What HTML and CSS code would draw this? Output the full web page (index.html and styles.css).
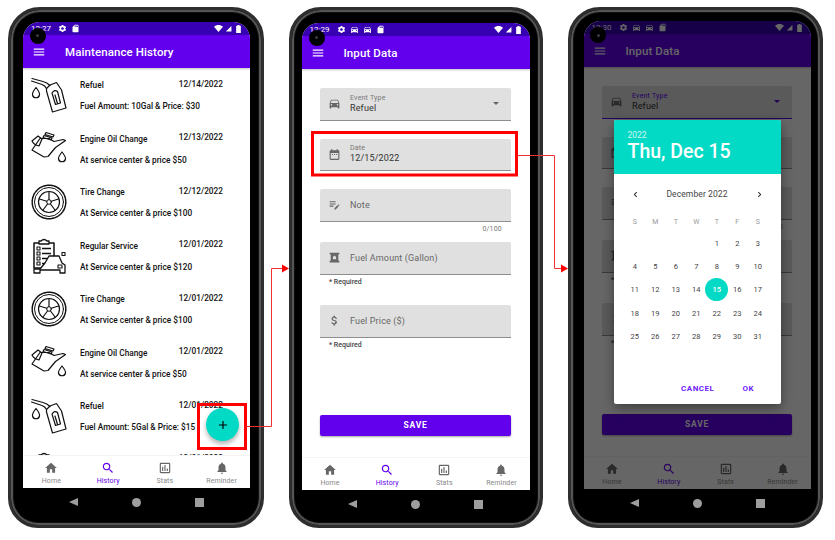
FILE: index.html
```html
<!DOCTYPE html>
<html lang="en">
<head>
    <meta charset="UTF-8">
    <meta name="viewport" content="width=device-width, initial-scale=1.0">
    <title>Maintenance App Flow</title>
    <link rel="stylesheet" href="styles.css">
</head>
<body>
    <!-- Shared icons -->
    <svg class="defs" width="0" height="0">
        <symbol id="i-menu" viewBox="0 0 24 24"><path d="M3 18h18v-2H3v2zm0-5h18v-2H3v2zm0-7v2h18V6H3z"/></symbol>
        <symbol id="i-gear" viewBox="0 0 24 24"><path d="M19.14 12.94c.04-.3.06-.61.06-.94 0-.32-.02-.64-.07-.94l2.03-1.58c.18-.14.23-.41.12-.61l-1.92-3.32c-.12-.22-.37-.29-.59-.22l-2.39.96c-.5-.38-1.03-.7-1.62-.94l-.36-2.54c-.04-.24-.24-.41-.48-.41h-3.84c-.24 0-.43.17-.47.41l-.36 2.54c-.59.24-1.13.57-1.62.94l-2.39-.96c-.22-.08-.47 0-.59.22L2.74 8.87c-.12.21-.08.47.12.61l2.03 1.58c-.05.3-.09.63-.09.94s.02.64.07.94l-2.03 1.58c-.18.14-.23.41-.12.61l1.92 3.32c.12.22.37.29.59.22l2.39-.96c.5.38 1.03.7 1.62.94l.36 2.54c.05.24.24.41.48.41h3.84c.24 0 .44-.17.47-.41l.36-2.54c.59-.24 1.13-.56 1.62-.94l2.39.96c.22.08.47 0 .59-.22l1.92-3.32c.12-.22.07-.47-.12-.61l-2.01-1.58zM12 15.6c-1.98 0-3.6-1.62-3.6-3.6s1.62-3.6 3.6-3.6 3.6 1.62 3.6 3.6-1.62 3.6-3.6 3.6z"/></symbol>
        <symbol id="i-sd" viewBox="0 0 24 24"><path d="M18 2h-8L4.02 8 4 20c0 1.1.9 2 2 2h12c1.1 0 2-.9 2-2V4c0-1.1-.9-2-2-2zm-6 6h-2V4h2v4zm3 0h-2V4h2v4zm3 0h-2V4h2v4z"/></symbol>
        <symbol id="i-car" viewBox="0 0 24 24"><path d="M18.92 6.01C18.72 5.42 18.16 5 17.5 5h-11c-.66 0-1.21.42-1.42 1.01L3 12v8c0 .55.45 1 1 1h1c.55 0 1-.45 1-1v-1h12v1c0 .55.45 1 1 1h1c.55 0 1-.45 1-1v-8l-2.08-5.99zM6.5 16c-.83 0-1.5-.67-1.5-1.5S5.67 13 6.5 13s1.5.67 1.5 1.5S7.33 16 6.5 16zm11 0c-.83 0-1.5-.67-1.5-1.5s.67-1.5 1.5-1.5 1.5.67 1.5 1.5-.67 1.5-1.5 1.5zM5 11l1.5-4.5h11L19 11H5z"/></symbol>
        <symbol id="i-wifi" viewBox="0 0 24 24"><path d="M12 21 0 7c7-6 17-6 24 0z"/></symbol>
        <symbol id="i-signal" viewBox="0 0 24 24"><path d="M22 3v19H3z"/></symbol>
        <symbol id="i-battery" viewBox="0 0 14 24"><path d="M4 0h6v2h3a1 1 0 0 1 1 1v20a1 1 0 0 1-1 1H1a1 1 0 0 1-1-1V3a1 1 0 0 1 1-1h3z"/></symbol>
        <symbol id="i-home" viewBox="0 0 24 24"><path d="M10 20v-6h4v6h5v-8h3L12 3 2 12h3v8z"/></symbol>
        <symbol id="i-search" viewBox="0 0 24 24"><path d="M15.5 14h-.79l-.28-.27C15.41 12.59 16 11.11 16 9.5 16 5.91 13.09 3 9.5 3S3 5.91 3 9.5 5.91 16 9.5 16c1.61 0 3.09-.59 4.23-1.57l.27.28v.79l5 4.99L20.49 19l-4.99-5zm-6 0C7.01 14 5 11.99 5 9.5S7.01 5 9.5 5 14 7.01 14 9.5 11.99 14 9.5 14z"/></symbol>
        <symbol id="i-stats" viewBox="0 0 24 24"><path d="M19 3H5c-1.1 0-2 .9-2 2v14c0 1.1.9 2 2 2h14c1.1 0 2-.9 2-2V5c0-1.1-.9-2-2-2zm0 16H5V5h14v14zM7 10h2v7H7zm4-3h2v10h-2zm4 6h2v4h-2z"/></symbol>
        <symbol id="i-bell" viewBox="0 0 24 24"><path d="M12 22c1.1 0 2-.9 2-2h-4c0 1.1.89 2 2 2zm6-6v-5c0-3.07-1.64-5.64-4.5-6.32V4c0-.83-.67-1.5-1.5-1.5s-1.5.67-1.5 1.5v.68C7.63 5.36 6 7.92 6 11v5l-2 2v1h16v-1l-2-2z"/></symbol>
        <symbol id="i-date" viewBox="0 0 24 24"><path d="M9 11H7v2h2v-2zm4 0h-2v2h2v-2zm4 0h-2v2h2v-2zm2-7h-1V2h-2v2H8V2H6v2H5c-1.11 0-1.99.9-1.99 2L3 20c0 1.1.89 2 2 2h14c1.1 0 2-.9 2-2V6c0-1.1-.9-2-2-2zm0 16H5V9h14v11z"/></symbol>
        <symbol id="i-note" viewBox="0 0 24 24"><path d="M3 10h11v2H3v-2zm0-2h11V6H3v2zm0 8h7v-2H3v2zm15.01-3.13.71-.71c.39-.39 1.02-.39 1.41 0l.71.71c.39.39.39 1.02 0 1.41l-.71.71-2.12-2.12zm-.71.71-5.3 5.3V21h2.12l5.3-5.3-2.12-2.12z"/></symbol>
        <symbol id="i-gas" viewBox="0 0 24 24"><path fill-rule="evenodd" d="M3 3h18v3h-2v12h2v3H3v-3h2V6H3zm9 5.5-3 2.5v4h6v-4z"/></symbol>
        <symbol id="i-dollar" viewBox="0 0 24 24"><path d="M11.8 10.9c-2.27-.59-3-1.2-3-2.15 0-1.09 1.01-1.85 2.7-1.85 1.78 0 2.44.85 2.5 2.1h2.21c-.07-1.72-1.12-3.3-3.21-3.81V3h-3v2.16c-1.94.42-3.5 1.68-3.5 3.61 0 2.31 1.91 3.46 4.7 4.13 2.5.6 3 1.48 3 2.41 0 .69-.49 1.79-2.7 1.79-2.06 0-2.87-.92-2.98-2.1h-2.2c.12 2.19 1.76 3.42 3.68 3.83V21h3v-2.15c1.95-.37 3.5-1.5 3.5-3.55 0-2.84-2.43-3.81-4.7-4.4z"/></symbol>
        <symbol id="i-prev" viewBox="0 0 24 24"><path d="M15.41 7.41 14 6l-6 6 6 6 1.41-1.41L10.83 12z"/></symbol>
        <symbol id="i-next" viewBox="0 0 24 24"><path d="M10 6 8.59 7.41 13.17 12l-4.58 4.59L10 18l6-6z"/></symbol>
        <symbol id="i-plus" viewBox="0 0 24 24"><path d="M19 13h-6v6h-2v-6H5v-2h6V5h2v6h6z"/></symbol>

        <symbol id="i-refuel" viewBox="0 0 36 36">
            <g fill="none" stroke="#111" stroke-width="1.2" stroke-linejoin="round" stroke-linecap="round">
                <path d="M1 1.500 12 4.500q4 1 7 4"/>
                <path d="M.5 4 11 7.500q3 1 4.500 4"/>
                <path d="M15.500 11.500 19 8l6.500-2.500 5 7.500 4.500 18-13.500 4-6-21z"/>
                <path d="M21 16q2.500-4 5.500-1.500l3 11.500-5 1.500z"/>
                <path d="M24 18l2.500 8.500"/>
                <path d="M5 10.500q-4 5-3.500 7.500a3.600 3.600 0 0 0 7 0q.5-2.500-3.500-7.500z"/>
            </g>
        </symbol>
        <symbol id="i-oil" viewBox="0 0 36 36">
            <g fill="none" stroke="#111" stroke-width="1.2" stroke-linejoin="round" stroke-linecap="round">
                <path d="M1 10 7 5l4 3-3 7q-5-1-7-5z"/>
                <path d="M9 7.500h9l5 3 9-2 2.500 1-10 7-7.500 9-4 .5-12-7z"/>
                <path d="M15 1.500l8 2.500-1 2-8-2.500zM13 4.500l8 2.500-1 2-8-2.500z"/>
                <path d="M31 21q-4 5-3.500 7a3.600 3.600 0 0 0 7 0q.5-2-3.500-7z"/>
            </g>
        </symbol>
        <symbol id="i-tire" viewBox="0 0 36 36">
            <g fill="none" stroke="#111" stroke-linecap="round">
                <circle cx="18" cy="18" r="16.800" stroke-width="1.500" stroke-dasharray="2.500 1"/>
                <circle cx="18" cy="18" r="14.500" stroke-width="1"/>
                <circle cx="18" cy="18" r="10.500" stroke-width="1.200"/>
                <circle cx="18" cy="18" r="2.300" stroke-width="1"/>
                <path stroke-width="1.200" d="M18 8v7.500M8.500 15l7.200 2.200M12 26l4.500-6M24 26l-4.500-6M27.500 15l-7.200 2.200"/>
            </g>
        </symbol>
        <symbol id="i-service" viewBox="0 0 36 36">
            <g stroke="#111" stroke-linejoin="round">
                <path fill="#fff" stroke-width="1.500" d="M3 5h20v25H3z"/>
                <path fill="#fff" stroke-width="1.300" d="M10 3q3-3 6 0h2v3H8V3z"/>
                <path fill="none" stroke-width="1.100" d="M6 9h3v3H6zM6 14h3v3H6zM6 19h3v3H6zM6 24h3v3H6z"/>
                <path fill="none" stroke-width="1.400" d="M11 10.500h9M11 15.500h9M11 20.500h9M11 25.500h9"/>
                <path fill="#fff" stroke-width="1.300" d="M18 18h10l3 7 3 2v8h-5v-3H9v3H3v-4h6l5-6z"/>
                <path fill="none" stroke-width="1.100" d="M27 27h4v3h-4zM31 14.500h3v3h-3z"/>
            </g>
        </symbol>
    </svg>

    <div class="stage">
        <!-- History screen -->
        <div class="phone phone-a">
            <span class="camera"><i></i></span>
            <div class="screen">
                <div class="statusbar">
                    <span class="clock">12:27</span>
                    <svg class="sbi"><use href="#i-gear"/></svg>
                    <svg class="sbi"><use href="#i-sd"/></svg>
                    <span class="sb-right">
                        <svg class="sbi"><use href="#i-wifi"/></svg>
                        <svg class="sbi sbi-sm"><use href="#i-signal"/></svg>
                        <svg class="sbi sbi-bat"><use href="#i-battery"/></svg>
                    </span>
                </div>
                <div class="appbar">
                    <svg class="menu"><use href="#i-menu"/></svg>
                    <span>Maintenance History</span>
                </div>
                <div class="list">
                    <div class="row">
                        <svg class="row-icon"><use href="#i-refuel"/></svg>
                        <div class="row-text">
                            <div class="row-top"><span>Refuel</span><span class="row-date">12/14/2022</span></div>
                            <div class="row-sub">Fuel Amount: 10Gal &amp; Price: $30</div>
                        </div>
                    </div>
                    <div class="row">
                        <svg class="row-icon"><use href="#i-oil"/></svg>
                        <div class="row-text">
                            <div class="row-top"><span>Engine Oil Change</span><span class="row-date">12/13/2022</span></div>
                            <div class="row-sub">At service center &amp; price $50</div>
                        </div>
                    </div>
                    <div class="row">
                        <svg class="row-icon"><use href="#i-tire"/></svg>
                        <div class="row-text">
                            <div class="row-top"><span>Tire Change</span><span class="row-date">12/12/2022</span></div>
                            <div class="row-sub">At Service center &amp; price $100</div>
                        </div>
                    </div>
                    <div class="row">
                        <svg class="row-icon"><use href="#i-service"/></svg>
                        <div class="row-text">
                            <div class="row-top"><span>Regular Service</span><span class="row-date">12/01/2022</span></div>
                            <div class="row-sub">At Service center &amp; price $120</div>
                        </div>
                    </div>
                    <div class="row">
                        <svg class="row-icon"><use href="#i-tire"/></svg>
                        <div class="row-text">
                            <div class="row-top"><span>Tire Change</span><span class="row-date">12/01/2022</span></div>
                            <div class="row-sub">At Service center &amp; price $100</div>
                        </div>
                    </div>
                    <div class="row">
                        <svg class="row-icon"><use href="#i-oil"/></svg>
                        <div class="row-text">
                            <div class="row-top"><span>Engine Oil Change</span><span class="row-date">12/01/2022</span></div>
                            <div class="row-sub">At service center &amp; price $50</div>
                        </div>
                    </div>
                    <div class="row">
                        <svg class="row-icon"><use href="#i-refuel"/></svg>
                        <div class="row-text">
                            <div class="row-top"><span>Refuel</span><span class="row-date">12/01/2022</span></div>
                            <div class="row-sub">Fuel Amount: 5Gal &amp; Price: $15</div>
                        </div>
                    </div>
                    <div class="row">
                        <svg class="row-icon"><use href="#i-service"/></svg>
                        <div class="row-text">
                            <div class="row-top"><span></span><span class="row-date">12/01/2022</span></div>
                        </div>
                    </div>
                </div>
                <div class="fab"><svg><use href="#i-plus"/></svg></div>
                <div class="tabs">
                    <div class="tab"><svg><use href="#i-home"/></svg>Home</div>
                    <div class="tab active"><svg><use href="#i-search"/></svg>History</div>
                    <div class="tab"><svg><use href="#i-stats"/></svg>Stats</div>
                    <div class="tab"><svg><use href="#i-bell"/></svg>Reminder</div>
                </div>
            </div>
            <div class="keys"><i class="key-back"></i><i class="key-home"></i><i class="key-recent"></i></div>
        </div>

        <!-- Input screen -->
        <div class="phone phone-b">
            <span class="camera"><i></i></span>
            <div class="screen">
                <div class="statusbar">
                    <span class="clock">12:29</span>
                    <svg class="sbi"><use href="#i-gear"/></svg>
                    <svg class="sbi"><use href="#i-car"/></svg>
                    <svg class="sbi"><use href="#i-car"/></svg>
                    <svg class="sbi"><use href="#i-sd"/></svg>
                    <span class="sb-right">
                        <svg class="sbi"><use href="#i-wifi"/></svg>
                        <svg class="sbi sbi-sm"><use href="#i-signal"/></svg>
                        <svg class="sbi sbi-bat"><use href="#i-battery"/></svg>
                    </span>
                </div>
                <div class="appbar">
                    <svg class="menu"><use href="#i-menu"/></svg>
                    <span>Input Data</span>
                </div>
                <div class="form">
                    <div class="field">
                        <svg class="field-icon"><use href="#i-car"/></svg>
                        <div class="field-text"><label>Event Type</label><span>Refuel</span></div>
                        <i class="caret"></i>
                    </div>
                    <div class="field">
                        <svg class="field-icon"><use href="#i-date"/></svg>
                        <div class="field-text"><label>Date</label><span>12/15/2022</span></div>
                    </div>
                    <div class="field field-empty">
                        <svg class="field-icon"><use href="#i-note"/></svg>
                        <div class="field-text">Note</div>
                    </div>
                    <div class="hint hint-count">0/100</div>
                    <div class="field field-empty">
                        <svg class="field-icon"><use href="#i-gas"/></svg>
                        <div class="field-text">Fuel Amount (Gallon)</div>
                    </div>
                    <div class="hint hint-req">* Required</div>
                    <div class="field field-empty">
                        <svg class="field-icon"><use href="#i-dollar"/></svg>
                        <div class="field-text">Fuel Price ($)</div>
                    </div>
                    <div class="hint hint-req">* Required</div>
                    <div class="save">SAVE</div>
                </div>
                <div class="tabs">
                    <div class="tab"><svg><use href="#i-home"/></svg>Home</div>
                    <div class="tab active"><svg><use href="#i-search"/></svg>History</div>
                    <div class="tab"><svg><use href="#i-stats"/></svg>Stats</div>
                    <div class="tab"><svg><use href="#i-bell"/></svg>Reminder</div>
                </div>
            </div>
            <div class="keys"><i class="key-back"></i><i class="key-home"></i><i class="key-recent"></i></div>
        </div>

        <!-- Date picker screen, the field labels behind the dialog are covered so left out -->
        <div class="phone phone-c">
            <span class="camera"><i></i></span>
            <div class="screen">
                <div class="statusbar">
                    <span class="clock">12:30</span>
                    <svg class="sbi"><use href="#i-gear"/></svg>
                    <svg class="sbi"><use href="#i-car"/></svg>
                    <svg class="sbi"><use href="#i-car"/></svg>
                    <svg class="sbi"><use href="#i-sd"/></svg>
                    <span class="sb-right">
                        <svg class="sbi"><use href="#i-wifi"/></svg>
                        <svg class="sbi sbi-sm"><use href="#i-signal"/></svg>
                        <svg class="sbi sbi-bat"><use href="#i-battery"/></svg>
                    </span>
                </div>
                <div class="appbar">
                    <svg class="menu"><use href="#i-menu"/></svg>
                    <span>Input Data</span>
                </div>
                <div class="form">
                    <div class="field field-focus">
                        <svg class="field-icon"><use href="#i-car"/></svg>
                        <div class="field-text"><label>Event Type</label><span>Refuel</span></div>
                        <i class="caret"></i>
                    </div>
                    <div class="field">
                        <svg class="field-icon"><use href="#i-date"/></svg>
                    </div>
                    <div class="field field-empty">
                        <svg class="field-icon"><use href="#i-note"/></svg>
                    </div>
                    <div class="hint hint-count">0/100</div>
                    <div class="field field-empty">
                        <svg class="field-icon"><use href="#i-gas"/></svg>
                    </div>
                    <div class="hint hint-req">* Required</div>
                    <div class="field field-empty">
                        <svg class="field-icon"><use href="#i-dollar"/></svg>
                    </div>
                    <div class="hint hint-req">* Required</div>
                    <div class="save">SAVE</div>
                </div>
                <div class="tabs">
                    <div class="tab"><svg><use href="#i-home"/></svg>Home</div>
                    <div class="tab active"><svg><use href="#i-search"/></svg>History</div>
                    <div class="tab"><svg><use href="#i-stats"/></svg>Stats</div>
                    <div class="tab"><svg><use href="#i-bell"/></svg>Reminder</div>
                </div>
                <div class="scrim"></div>
                <div class="picker">
                    <div class="picker-head">
                        <div class="picker-year">2022</div>
                        <div class="picker-date">Thu, Dec 15</div>
                    </div>
                    <div class="picker-month">
                        <svg><use href="#i-prev"/></svg>
                        <span>December 2022</span>
                        <svg><use href="#i-next"/></svg>
                    </div>
                    <div class="cal cal-days">
                        <span>S</span><span>M</span><span>T</span><span>W</span><span>T</span><span>F</span><span>S</span>
                    </div>
                    <div class="cal">
                        <span></span><span></span><span></span><span></span><span>1</span><span>2</span><span>3</span>
                        <span>4</span><span>5</span><span>6</span><span>7</span><span>8</span><span>9</span><span>10</span>
                        <span>11</span><span>12</span><span>13</span><span>14</span><span class="today">15</span><span>16</span><span>17</span>
                        <span>18</span><span>19</span><span>20</span><span>21</span><span>22</span><span>23</span><span>24</span>
                        <span>25</span><span>26</span><span>27</span><span>28</span><span>29</span><span>30</span><span>31</span>
                    </div>
                    <div class="picker-actions"><span>CANCEL</span><span>OK</span></div>
                </div>
            </div>
            <div class="keys"><i class="key-back"></i><i class="key-home"></i><i class="key-recent"></i></div>
        </div>
    </div>

    <!-- Red callouts drawn over the phones -->
    <svg class="callouts" width="835" height="540" viewBox="0 0 835 540">
        <rect x="198.500" y="404.500" width="47" height="44" fill="none" stroke="#f00" stroke-width="3"/>
        <rect x="312.500" y="132.500" width="204" height="42.500" fill="none" stroke="#f00" stroke-width="3"/>
        <path d="M246 426.500h25.500V268.500H284M518 155.500h36.500V268.500H562" fill="none" stroke="#f03030" stroke-width="1"/>
        <path d="M289 268.500l-7-4v8zM568 268.500l-7-4v8z" fill="#f00"/>
    </svg>
</body>
</html>
```

FILE: styles.css
```css
* {
    box-sizing: border-box;
}

body {
    margin: 0;
    width: 835px;
    height: 540px;
    overflow: hidden;
    background: #fff;
    font-family: 'Roboto', 'Liberation Sans', sans-serif;
}

.defs {
    position: absolute;
}

.stage {
    display: flex;
    gap: 25px;
    padding: 7px 0 0 8px;
}

.callouts {
    position: absolute;
    top: 0;
    left: 0;
}

/* Phone frame */
.phone {
    position: relative;
    display: flex;
    flex-direction: column;
    height: 521px;
    background: #000;
    border: 3px solid #2e2e2e;
    border-radius: 32px 32px 30px 30px;
    box-shadow: inset 0 0 0 2px #555, inset 0 0 0 3px #111;
}

.phone-a {
    width: 256px;
    padding: 12px 11px 0 12px;
}

.phone-b {
    width: 254px;
    padding: 13px 10px 0 9.5px;
}

.phone-c {
    width: 255px;
    padding: 11px 9px 0 12.5px;
}

.camera {
    position: absolute;
    z-index: 3;
    width: 16px;
    height: 16px;
    border-radius: 50%;
    background: #000;
    display: flex;
    align-items: center;
    justify-content: center;
}

.camera i {
    width: 3px;
    height: 3px;
    border-radius: 50%;
    background: #3a3a44;
}

.phone-a .camera {
    left: 18.700px;
    top: 17.700px;
}

.phone-b .camera {
    left: 16.700px;
    top: 19.700px;
}

.phone-c .camera {
    left: 19px;
    top: 17px;
}

.screen {
    position: relative;
    display: flex;
    flex-direction: column;
    overflow: hidden;
    background: #fff;
    border-radius: 17px 17px 0 0;
}

.phone-a .screen {
    height: 466px;
}

.phone-b .screen {
    height: 467px;
}

.phone-c .screen {
    height: 468px;
}

.statusbar {
    display: flex;
    align-items: center;
    flex: none;
    gap: 4px;
    height: 13px;
    padding: 0 9px 0 8px;
    background: #3700b3;
    color: #fff;
    font-size: 8px;
}

.clock {
    width: 21px;
    margin-right: 2px;
}

.sbi {
    width: 9px;
    height: 9px;
    fill: #fff;
}

.sbi-sm {
    width: 7px;
    height: 7px;
}

.sbi-bat {
    width: 5px;
    height: 8px;
    margin-left: 2px;
}

.sb-right {
    display: flex;
    align-items: center;
    gap: 2px;
    margin-left: auto;
}

.appbar {
    display: flex;
    align-items: center;
    flex: none;
    height: 33px;
    padding: 0 0 0 9px;
    background: #6200ee;
    color: #fff;
    font-size: 11.500px;
    font-weight: 500;
    letter-spacing: 0.1px;
    box-shadow: 0 1px 2px rgba(0, 0, 0, 0.25);
    position: relative;
}

.menu {
    width: 14px;
    height: 14px;
    margin-right: 19px;
    fill: #fff;
}

/* History list */
.list {
    flex: 1;
    min-height: 0;
    overflow: hidden;
}

.row {
    display: flex;
    height: 53.500px;
    padding: 9px 27px 0 8px;
    font-size: 8.300px;
    font-weight: 500;
    color: #111;
}

.row-icon {
    flex: none;
    width: 36px;
    height: 36px;
    margin-right: 13px;
}

.row-text {
    flex: 1;
}

.row-top {
    display: flex;
    justify-content: space-between;
    height: 12px;
    line-height: 12px;
    margin-top: 2px;
}

.row-date {
    margin-top: -1.500px;
}

.row-sub {
    margin-top: 9px;
    line-height: 12px;
    white-space: nowrap;
}

.fab {
    position: absolute;
    left: 183px;
    top: 386px;
    width: 33px;
    height: 33px;
    display: flex;
    align-items: center;
    justify-content: center;
    border-radius: 50%;
    background: #03dac5;
    box-shadow: 0 3px 5px rgba(0, 0, 0, 0.3);
}

.fab svg {
    width: 14px;
    height: 14px;
}

/* Bottom navigation */
.tabs {
    display: flex;
    flex: none;
    height: 33px;
    padding-top: 5px;
    background: #fff;
    border-top: 1px solid #f4f4f4;
}

.tab {
    flex: 1;
    display: flex;
    flex-direction: column;
    align-items: center;
    font-size: 7px;
    line-height: 10px;
    letter-spacing: 0.1px;
    color: #888;
}

.tab svg {
    width: 14px;
    height: 14px;
    margin-bottom: 1px;
    fill: #666;
}

.tab.active {
    color: #6200ee;
}

.tab.active svg {
    fill: #6200ee;
}

.keys {
    display: flex;
    align-items: center;
    justify-content: center;
    gap: 54px;
    height: 28px;
}

.keys i {
    width: 9px;
    height: 9px;
    background: #9e9e9e;
}

.keys .key-back {
    width: 0;
    height: 0;
    background: none;
    border-style: solid;
    border-width: 4.500px 9px 4.500px 0;
    border-color: transparent #9e9e9e transparent transparent;
}

.keys .key-home {
    border-radius: 50%;
}

/* Input form */
.form {
    flex: 1;
    min-height: 0;
    display: flex;
    flex-direction: column;
    padding: 19px 19px 21px 18.500px;
}

.field {
    flex: none;
    display: flex;
    align-items: center;
    height: 32.500px;
    margin-bottom: 18px;
    padding: 0 10px 0 8px;
    background: #e0e0e0;
    border-bottom: 1px solid #8e8e8e;
    border-radius: 2px 2px 0 0;
    color: #666;
}

.field-icon {
    flex: none;
    width: 13px;
    height: 13px;
    margin-right: 9px;
    fill: #666;
}

.field-text {
    flex: 1;
    display: flex;
    flex-direction: column;
    font-size: 9px;
    letter-spacing: 0.15px;
}

.field-text label {
    padding-top: 1px;
    font-size: 7px;
    line-height: 8px;
    letter-spacing: 0.2px;
    color: #777;
}

.field-text span {
    line-height: 13px;
    color: #333;
}

.caret {
    width: 0;
    height: 0;
    margin: 0 2px 0 0;
    border-style: solid;
    border-width: 3px 3px 0;
    border-color: #666 transparent transparent;
}

.field-empty {
    margin-bottom: 0;
}

.hint {
    flex: none;
    font-size: 7px;
    line-height: 14px;
}

.hint-count {
    height: 20.500px;
    padding-right: 9px;
    text-align: right;
    letter-spacing: 0.2px;
    color: #777;
}

.hint-req {
    height: 30.500px;
    padding-left: 9px;
    font-weight: 500;
    color: #444;
}

.save {
    flex: none;
    margin-top: auto;
    height: 21px;
    line-height: 21px;
    text-align: center;
    font-size: 8.500px;
    font-weight: 700;
    letter-spacing: 0.8px;
    color: #fff;
    background: #6200ee;
    border-radius: 2px;
    box-shadow: 0 1px 2px rgba(0, 0, 0, 0.35);
}

.field-focus {
    border-bottom-color: #6200ee;
}

.field-focus .field-text label {
    color: #6200ee;
}

.field-focus .caret {
    border-top-color: #6200ee;
}

/* Date picker dialog */
.scrim {
    position: absolute;
    inset: 0;
    background: rgba(0, 0, 0, 0.6);
}

.picker {
    position: absolute;
    left: 30px;
    top: 99px;
    width: 167px;
    height: 284px;
    background: #fff;
    border-radius: 2px;
    box-shadow: 0 4px 12px rgba(0, 0, 0, 0.4);
}

.picker-head {
    height: 54px;
    padding: 9px 14px 0;
    background: #03dac5;
    color: #fff;
    border-radius: 2px 2px 0 0;
}

.picker-year {
    font-size: 8.500px;
    line-height: 12px;
    opacity: 0.8;
}

.picker-date {
    font-size: 19.500px;
    font-weight: 500;
    line-height: 22px;
}

.picker-month {
    display: flex;
    align-items: center;
    justify-content: space-between;
    height: 20px;
    margin-top: 10px;
    padding: 0 16px;
    font-size: 8.500px;
    letter-spacing: 0.1px;
    color: #444;
}

.picker-month svg {
    width: 11px;
    height: 11px;
    fill: #222;
}

.cal {
    display: grid;
    grid-template-columns: repeat(7, 20.500px);
    grid-auto-rows: 23.400px;
    padding-left: 11px;
    font-size: 7.500px;
    color: #444;
}

.cal span {
    display: flex;
    align-items: center;
    justify-content: center;
}

.cal-days {
    margin-top: 9.500px;
    margin-bottom: 2px;
    font-size: 7px;
    color: #999;
    grid-auto-rows: 16px;
}

.cal .today {
    justify-self: center;
    width: 23px;
    height: 23px;
    background: #03dac5;
    border-radius: 50%;
    color: #fff;
    font-weight: 500;
}

.picker-actions {
    display: flex;
    justify-content: flex-end;
    gap: 28px;
    padding: 0 26.500px 0 0;
    margin-top: 36px;
    font-size: 8px;
    font-weight: 700;
    letter-spacing: 0.5px;
    color: #6f22ff;
}
```
